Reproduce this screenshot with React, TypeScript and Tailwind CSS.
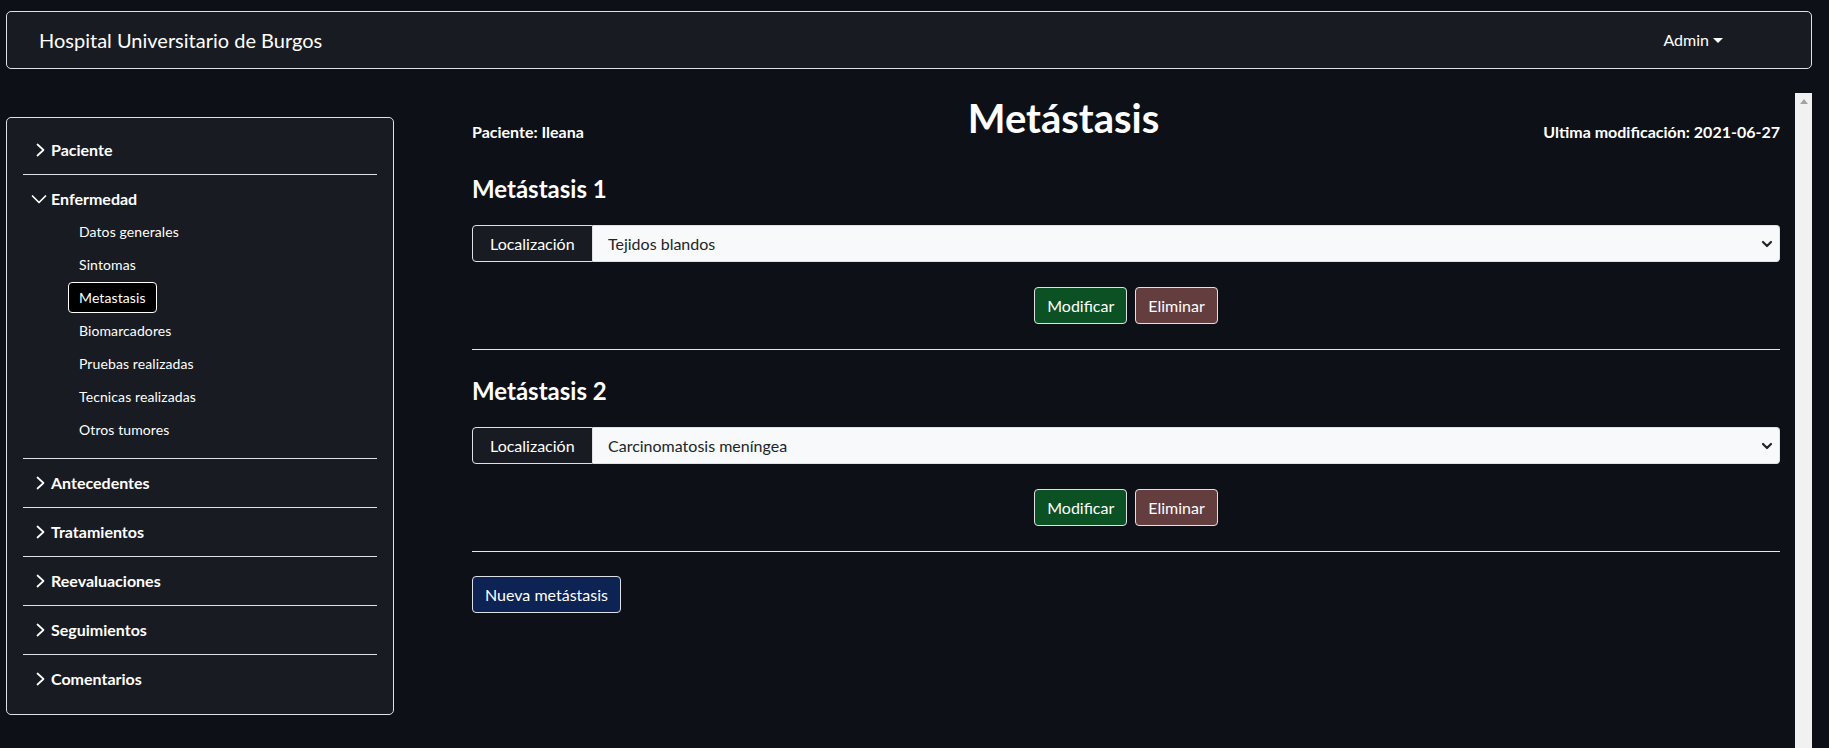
import React from "react";

const ChevronRight = () => (
  <svg width="16" height="16" viewBox="0 0 16 16" fill="none" stroke="currentColor" strokeWidth="1.7" strokeLinecap="round" strokeLinejoin="round">
    <path d="M6.5 2.5 12.5 8 6.5 13.5" />
  </svg>
);

const ChevronDown = () => (
  <svg width="16" height="16" viewBox="0 0 16 16" fill="none" stroke="currentColor" strokeWidth="1.7" strokeLinecap="round" strokeLinejoin="round">
    <path d="M1.5 5 8 11.5 14.5 5" />
  </svg>
);

const closedSections = ["Antecedentes", "Tratamientos", "Reevaluaciones", "Seguimientos", "Comentarios"];

const enfermedadLinks = [
  "Datos generales",
  "Sintomas",
  "Metastasis",
  "Biomarcadores",
  "Pruebas realizadas",
  "Tecnicas realizadas",
  "Otros tumores",
];

const metastasis = [
  { id: 1, localizacion: "Tejidos blandos" },
  { id: 2, localizacion: "Carcinomatosis meníngea" },
];

const SideHeader = ({ label, last }: { label: string; last?: boolean }) => (
  <div className={`flex items-center gap-1 py-3 pl-2 text-[16px] font-bold leading-6 ${last ? "" : "border-b border-[#dee2e6]"}`}>
    <ChevronRight />
    <span>{label}</span>
  </div>
);

const Sidebar = () => (
  <aside className="mt-[24px] w-[388px] self-start rounded-[5px] border border-[#dee2e6] bg-[#181c22] px-4 pt-2 pb-[11px]">
    <SideHeader label="Paciente" />

    {/* expanded section */}
    <div className="border-b border-[#dee2e6]">
      <div className="flex items-center gap-1 pt-3 pl-2 text-[16px] font-bold leading-6">
        <ChevronDown />
        <span>Enfermedad</span>
      </div>
      <ul className="mt-[5px] ml-[45px] flex flex-col items-start gap-[2px] pb-[13px]">
        {enfermedadLinks.map((link) => (
          <li
            key={link}
            className={`h-[31px] rounded-[4px] border px-[10px] py-[4px] text-[14px] leading-[21px] tracking-[0.1px] ${
              link === "Metastasis" ? "border-white bg-black" : "border-transparent"
            }`}
          >
            {link}
          </li>
        ))}
      </ul>
    </div>

    {closedSections.map((s, i) => (
      <SideHeader key={s} label={s} last={i === closedSections.length - 1} />
    ))}
  </aside>
);

const MetastasisBlock = ({ id, localizacion, first }: { id: number; localizacion: string; first: boolean }) => (
  <section>
    <h4 className={`${first ? "mt-[30px]" : "mt-[26px]"} text-[24px] font-bold leading-[29px]`}>Metástasis {id}</h4>

    {/* input group */}
    <div className="mt-[22px] flex h-[37px] text-[16px]">
      <span className="flex w-[121px] items-center rounded-l-[4px] border border-[#dee2e6] bg-[#181c22] pl-[17px]">
        Localización
      </span>
      <div className="flex flex-1 items-center justify-between rounded-r-[4px] border border-l-0 border-[#dee2e6] bg-[#f8f9fa] pr-[6px] pl-[15px] text-[#212529]">
        <span>{localizacion}</span>
        <svg width="12" height="8" viewBox="0 0 12 8" fill="none" stroke="#212529" strokeWidth="2.2" strokeLinecap="round" strokeLinejoin="round">
          <path d="M2 2 6 6 10 2" />
        </svg>
      </div>
    </div>

    <div className="mt-[25px] flex justify-center gap-2">
      <button className="h-[37px] rounded-[4px] border border-[#dee2e6] bg-[#0b5124] px-3 text-[16px] text-white">
        Modificar
      </button>
      <button className="h-[37px] rounded-[4px] border border-[#dee2e6] bg-[#643e3e] px-3 text-[16px] text-white">
        Eliminar
      </button>
    </div>

    <hr className="mt-[25px] border-t border-[#e6e6e6]" />
  </section>
);

export default function App() {
  return (
    <div className="h-[748px] overflow-hidden bg-[#0d1117] pt-[11px] pr-[17px] pl-[6px] font-[Lato,'Noto_Sans',sans-serif] text-white">
      {/* navbar */}
      <nav className="flex h-[58px] items-center justify-between rounded-[5px] border border-[#dee2e6] bg-[#181c22] pr-[88px] pl-[32px]">
        <span className="text-[20px]">Hospital Universitario de Burgos</span>
        <span className="flex items-center text-[16px]">
          Admin
          <span className="ml-[4px] border-x-[5px] border-t-[5px] border-x-transparent border-t-white" />
        </span>
      </nav>

      <div className="mt-[24px] flex h-[655px]">
        <Sidebar />

        <div className="flex flex-1">
          <main className="flex-1 pr-[15px] pl-[78px]">
            <div className="mt-[1px] flex items-start justify-between">
              <p className="mt-[26px] text-[16px] font-bold leading-6">Paciente: Ileana</p>
              <h1 className="text-[40px] font-bold leading-[48px]">Metástasis</h1>
              <p className="mt-[26px] text-[16px] font-bold leading-6">Ultima modificación: 2021-06-27</p>
            </div>

            {metastasis.map((m, i) => (
              <MetastasisBlock key={m.id} id={m.id} localizacion={m.localizacion} first={i === 0} />
            ))}

            <button className="mt-[24px] h-[37px] rounded-[4px] border border-[#dee2e6] bg-[#0c2354] px-3 text-[16px] text-white">
              Nueva metástasis
            </button>
          </main>

          {/* scrollbar track */}
          <div className="flex w-[17px] justify-center bg-[#f1f1f1] pt-[6px]">
            <svg width="8" height="5" viewBox="0 0 8 5">
              <path d="M4 0 8 5 0 5Z" fill="#a3a3a3" />
            </svg>
          </div>
        </div>
      </div>
    </div>
  );
}
